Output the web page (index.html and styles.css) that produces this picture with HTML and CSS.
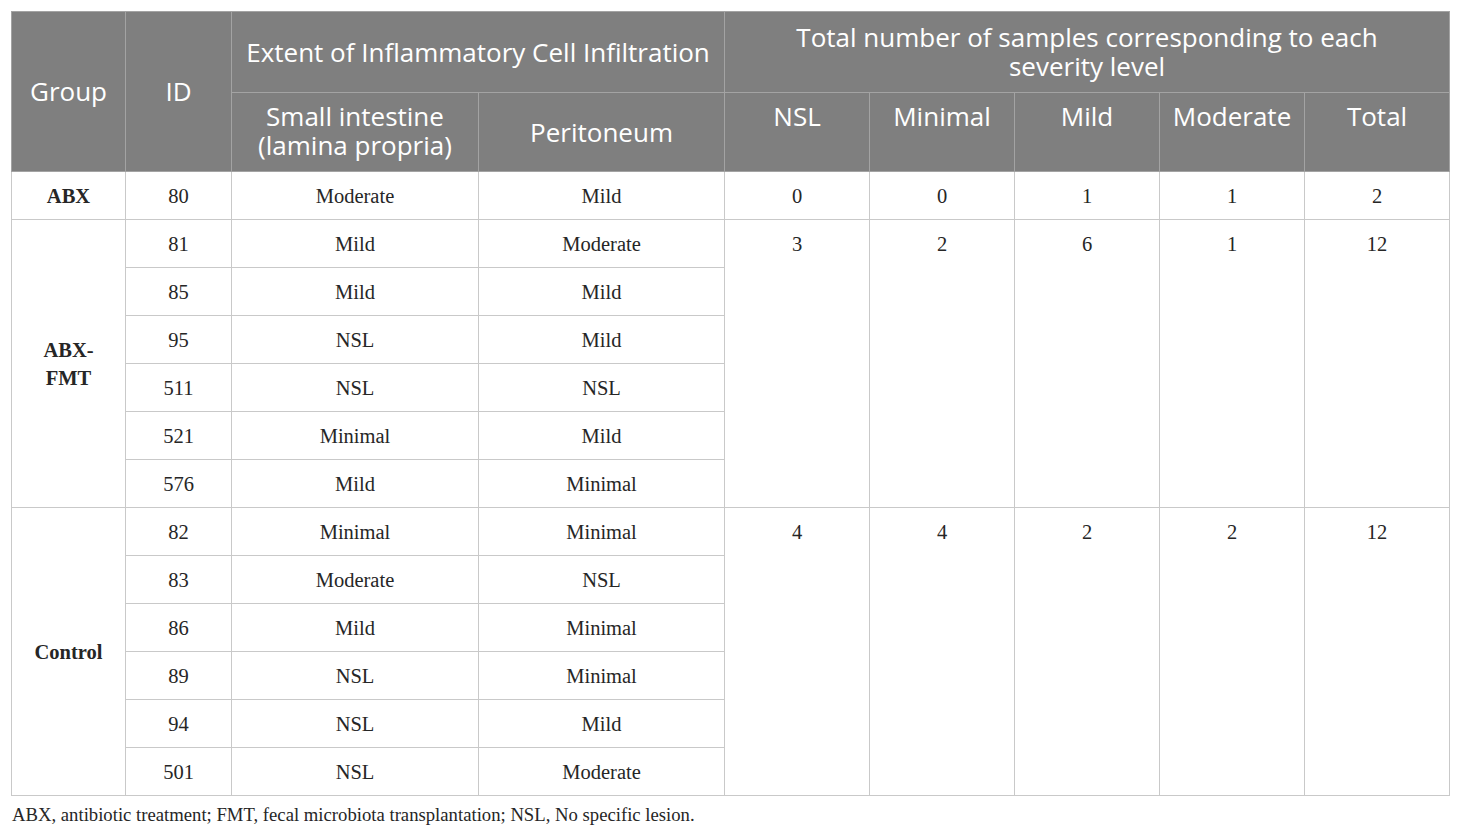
FILE: index.html
```html
<!DOCTYPE html>
<html lang="en">
<head>
    <meta charset="UTF-8">
    <title>Inflammatory cell infiltration</title>
    <link rel="stylesheet" href="styles.css">
</head>
<body>
    <table class="data-table">
        <colgroup>
            <col style="width: 114px">
            <col style="width: 106px">
            <col style="width: 247px">
            <col style="width: 246px">
            <col style="width: 145px">
            <col style="width: 145px">
            <col style="width: 145px">
            <col style="width: 145px">
            <col style="width: 145px">
        </colgroup>
        <thead>
            <tr class="head-top">
                <th rowspan="2">Group</th>
                <th rowspan="2">ID</th>
                <th colspan="2">Extent of Inflammatory Cell Infiltration</th>
                <th colspan="5">Total number of samples corresponding to each<br>severity level</th>
            </tr>
            <tr class="head-sub">
                <th class="top">Small intestine<br>(lamina propria)</th>
                <th>Peritoneum</th>
                <th class="top">NSL</th>
                <th class="top">Minimal</th>
                <th class="top">Mild</th>
                <th class="top">Moderate</th>
                <th class="top">Total</th>
            </tr>
        </thead>
        <tbody>
            <tr>
                <td class="group">ABX</td>
                <td>80</td><td>Moderate</td><td>Mild</td>
                <td>0</td><td>0</td><td>1</td><td>1</td><td>2</td>
            </tr>
            <tr>
                <td class="group" rowspan="6">ABX-<br>FMT</td>
                <td>81</td><td>Mild</td><td>Moderate</td>
                <td rowspan="6">3</td><td rowspan="6">2</td><td rowspan="6">6</td><td rowspan="6">1</td><td rowspan="6">12</td>
            </tr>
            <tr><td>85</td><td>Mild</td><td>Mild</td></tr>
            <tr><td>95</td><td>NSL</td><td>Mild</td></tr>
            <tr><td>511</td><td>NSL</td><td>NSL</td></tr>
            <tr><td>521</td><td>Minimal</td><td>Mild</td></tr>
            <tr><td>576</td><td>Mild</td><td>Minimal</td></tr>
            <tr>
                <td class="group" rowspan="6">Control</td>
                <td>82</td><td>Minimal</td><td>Minimal</td>
                <td rowspan="6">4</td><td rowspan="6">4</td><td rowspan="6">2</td><td rowspan="6">2</td><td rowspan="6">12</td>
            </tr>
            <tr><td>83</td><td>Moderate</td><td>NSL</td></tr>
            <tr><td>86</td><td>Mild</td><td>Minimal</td></tr>
            <tr><td>89</td><td>NSL</td><td>Minimal</td></tr>
            <tr><td>94</td><td>NSL</td><td>Mild</td></tr>
            <tr><td>501</td><td>NSL</td><td>Moderate</td></tr>
        </tbody>
    </table>
    <p class="footnote">ABX, antibiotic treatment; FMT, fecal microbiota transplantation; NSL, No specific lesion.</p>
</body>
</html>
```

FILE: styles.css
```css
body {
    margin: 0;
    padding: 11px 0 0 11px;
    background: #fff;
    color: #262626;
    font-family: "Liberation Serif", "Times New Roman", serif;
}

.data-table {
    width: 1439px;
    border-collapse: collapse;
    table-layout: fixed;
    border: 1px solid #c9c9c9;
}

.data-table th {
    background: #7f7f7f;
    color: #fff;
    font-family: "Open Sans", "Noto Sans", sans-serif;
    font-weight: 400;
    font-size: 26px;
    line-height: 29px;
    padding: 0 6px;
    border: 1px solid #a3a3a3;
    text-align: center;
    vertical-align: middle;
}

.data-table th.top {
    vertical-align: top;
    padding-top: 9px;
}

.head-top {
    height: 81px;
}

.head-sub {
    height: 79px;
}

.data-table td {
    height: 47px;
    padding: 0 6px;
    border: 1px solid #c9c9c9;
    font-size: 20.5px;
    line-height: 28px;
    text-align: center;
    vertical-align: middle;
}

.data-table td[rowspan] {
    vertical-align: top;
    padding-top: 10px;
}

.data-table td.group {
    font-weight: 700;
    vertical-align: middle;
    padding-top: 0;
}

.footnote {
    margin: 8px 0 0 1px;
    font-size: 18.7px;
    color: #262626;
}
```
